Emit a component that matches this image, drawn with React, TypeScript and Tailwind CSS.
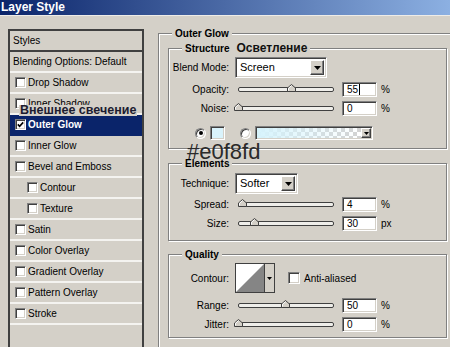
import React from 'react';

const sunken =
    'border border-t-[#808080] border-l-[#808080] border-b-white border-r-white shadow-[inset_1px_1px_0_#404040,inset_-1px_-1px_0_#d4d0c8]';
const raised =
    'border border-t-white border-l-white border-b-[#404040] border-r-[#404040] shadow-[inset_-1px_-1px_0_#808080]';
const etched = 'border border-[#808080] shadow-[inset_1px_1px_0_#fff,1px_1px_0_#fff]';

const effects = [
    { name: 'Drop Shadow' },
    { name: 'Inner Shadow' },
    { name: 'Outer Glow', active: true },
    { name: 'Inner Glow' },
    { name: 'Bevel and Emboss' },
    { name: 'Contour', sub: true },
    { name: 'Texture', sub: true },
    { name: 'Satin' },
    { name: 'Color Overlay' },
    { name: 'Gradient Overlay' },
    { name: 'Pattern Overlay' },
    { name: 'Stroke' },
];

function Arrow({ small }: { small?: boolean }) {
    return small ? (
        <svg width="5" height="3" viewBox="0 0 5 3">
            <path d="M0 0h5L2.5 3z" fill="#000" />
        </svg>
    ) : (
        <svg width="7" height="4" viewBox="0 0 7 4">
            <path d="M0 0h7L3.5 4z" fill="#000" />
        </svg>
    );
}

function Check({ checked, className = '' }: { checked?: boolean; className?: string }) {
    return (
        <div className={`w-[11px] h-[11px] shrink-0 bg-white flex items-center justify-center ${sunken} ${className}`}>
            {checked && (
                <svg width="7" height="7" viewBox="0 0 7 7">
                    <path d="M0.8 3.4l1.8 1.9L6.2 1.4" stroke="#000" strokeWidth="1.6" fill="none" />
                </svg>
            )}
        </div>
    );
}

function Radio({ checked, className = '' }: { checked?: boolean; className?: string }) {
    return (
        <div className={`w-[11px] h-[11px] shrink-0 rounded-full bg-white flex items-center justify-center ${sunken} ${className}`}>
            {checked && <div className="w-[4px] h-[4px] rounded-full bg-black" />}
        </div>
    );
}

function Label({ text }: { text: string }) {
    return <div className="w-[60px] text-right whitespace-nowrap">{text}</div>;
}

function Select({ value, width }: { value: string; width: string }) {
    return (
        <div className={`ml-[6px] h-[21px] ${width} flex p-[2px] bg-white ${sunken}`}>
            <div className="flex-1 flex items-center pl-[2px] text-[11px]">{value}</div>
            <div className={`w-[14px] bg-[#d4d0c8] flex items-center justify-center ${raised}`}>
                <Arrow />
            </div>
        </div>
    );
}

function SliderRow({ label, thumb, value, unit, caret }: { label: string; thumb: number; value: string; unit: string; caret?: boolean }) {
    return (
        <div className="flex items-center h-[15px]">
            <Label text={label} />
            <div className="ml-[6px] relative w-[99px] h-[15px] flex items-center">
                <div className="ml-[3px] w-[96px] h-[5px] border border-[#404040] bg-[#efeeea] rounded-[2px]" />
                <svg className="absolute top-[2px]" style={{ left: thumb }} width="9" height="8" viewBox="0 0 9 8">
                    <polygon points="0.5,7.5 0.5,4 4.5,0.5 8.5,4 8.5,7.5" fill="#d4d0c8" stroke="#404040" />
                    <polyline points="1.5,6.5 1.5,4.3 4.5,1.6" stroke="#fff" fill="none" />
                </svg>
            </div>
            <div className={`ml-[8px] w-[35px] h-[15px] bg-white flex items-center pl-[4px] ${sunken}`}>
                {value}
                {caret && <span className="ml-px w-px h-[11px] bg-black" />}
            </div>
            <div className="ml-[4px]">{unit}</div>
        </div>
    );
}

function GroupBox({ title, extra, className = '', children }: { title: string; extra?: string; className?: string; children?: React.ReactNode }) {
    return (
        <div className={`${etched} ${className}`}>
            <div className="-mt-[7px] ml-[13px] h-[13px] w-fit px-[3px] bg-[#d4d0c8] flex items-center font-bold leading-[13px]">
                <span>{title}</span>
                {extra && <span className="ml-[7px] text-[12px] text-[#111]">{extra}</span>}
            </div>
            {children}
        </div>
    );
}

export default function App() {
    return (
        <div className="relative w-[450px] h-[347px] overflow-hidden bg-[#d4d0c8] text-black text-[10px] font-['Liberation_Sans',Arial,sans-serif]">
            <div className="h-[15px] bg-[linear-gradient(to_right,#0a246a,#8cb0e2)] text-white font-bold text-[12px] leading-[15px] pl-[1px]">
                Layer Style
            </div>
            <div className="h-px bg-[#eeece8]" />

            <div className="flex">
                <div className="ml-[8px] mt-[13px] w-[136px] h-[330px] border-2 border-[#404040] shrink-0">
                    <div className="h-[21px] flex items-center pl-[3px] border-b-2 border-[#404040]">Styles</div>
                    <div className="h-[21px] flex items-center pl-[3px] border-b-2 border-[#f4f3f0]">Blending Options: Default</div>
                    {effects.map((e) => (
                        <div
                            key={e.name}
                            className={`h-[21px] flex items-center border-b-2 ${e.active ? 'bg-[#0a246a] text-white font-bold border-[#0a246a]' : 'border-[#f4f3f0]'}`}
                        >
                            <Check checked={e.active} className={e.sub ? 'ml-[17px]' : 'ml-[5px]'} />
                            <span className="ml-[2px] whitespace-nowrap">{e.name}</span>
                        </div>
                    ))}
                </div>

                <GroupBox title="Outer Glow" className="ml-[14px] mt-[17px] w-[294px] pb-[5px] shrink-0">
                    <GroupBox title="Structure" extra="Осветление" className="ml-[9px] mt-[8px] w-[279px] h-[101px]">
                        <div className="mt-[2px] h-[21px] flex items-center">
                            <Label text="Blend Mode:" />
                            <Select value="Screen" width="w-[92px]" />
                        </div>
                        <div className="mt-[4px]">
                            <SliderRow label="Opacity:" thumb={52} value="55" unit="%" caret />
                        </div>
                        <div className="mt-[4px]">
                            <SliderRow label="Noise:" thumb={-1} value="0" unit="%" />
                        </div>
                        <div className="mt-[10px] h-[14px] flex items-center">
                            <Radio checked className="ml-[26px]" />
                            <div className={`ml-[4px] w-[15px] h-[14px] bg-[#d9f3fc] ${sunken}`} />
                            <Radio className="ml-[15px]" />
                            <div className={`ml-[4px] w-[118px] h-[14px] flex p-[1px] bg-white ${sunken}`}>
                                <div className="flex-1 bg-[linear-gradient(to_right,#d6f3fc,rgba(214,243,252,0)),repeating-conic-gradient(#d2d2d2_0_25%,#fff_0_50%)] bg-[length:100%_100%,8px_8px]" />
                                <div className={`w-[10px] bg-[#d4d0c8] flex items-center justify-center ${raised}`}>
                                    <Arrow small />
                                </div>
                            </div>
                        </div>
                    </GroupBox>

                    <GroupBox title="Elements" className="ml-[9px] mt-[14px] w-[279px] h-[78px]">
                        <div className="mt-[3px] h-[21px] flex items-center">
                            <Label text="Technique:" />
                            <Select value="Softer" width="w-[63px]" />
                        </div>
                        <div className="mt-[3px]">
                            <SliderRow label="Spread:" thumb={3} value="4" unit="%" />
                        </div>
                        <div className="mt-[4px]">
                            <SliderRow label="Size:" thumb={15} value="30" unit="px" />
                        </div>
                    </GroupBox>

                    <GroupBox title="Quality" className="ml-[9px] mt-[13px] w-[279px] h-[84px]">
                        <div className="mt-[2px] h-[30px] flex items-center">
                            <Label text="Contour:" />
                            <div className="ml-[6px] w-[40px] h-[30px] flex border border-[#404040] bg-white">
                                <svg className="flex-1 h-full" viewBox="0 0 29 28" preserveAspectRatio="none">
                                    <polygon points="0,28 29,0 29,28" fill="#858585" />
                                </svg>
                                <div className="w-[10px] bg-[#d4d0c8] border-l border-[#404040] flex items-center justify-center">
                                    <Arrow small />
                                </div>
                            </div>
                            <div className={`ml-[13px] w-[12px] h-[12px] bg-white ${sunken}`} />
                            <span className="ml-[4px]">Anti-aliased</span>
                        </div>
                        <div className="mt-[5px]">
                            <SliderRow label="Range:" thumb={46} value="50" unit="%" />
                        </div>
                        <div className="mt-[4px]">
                            <SliderRow label="Jitter:" thumb={-1} value="0" unit="%" />
                        </div>
                    </GroupBox>
                </GroupBox>
            </div>

            <div className="absolute left-[19px] top-[105px] h-[11px] px-px bg-[#d4d0c8] text-[12.5px] font-bold leading-[11px] text-[#1c1c30] whitespace-nowrap">
                Внешнее свечение
            </div>
            <div className="absolute left-[187px] top-[141px] text-[22px] leading-[22px] text-[#2a2a2a]">#e0f8fd</div>
        </div>
    );
}
